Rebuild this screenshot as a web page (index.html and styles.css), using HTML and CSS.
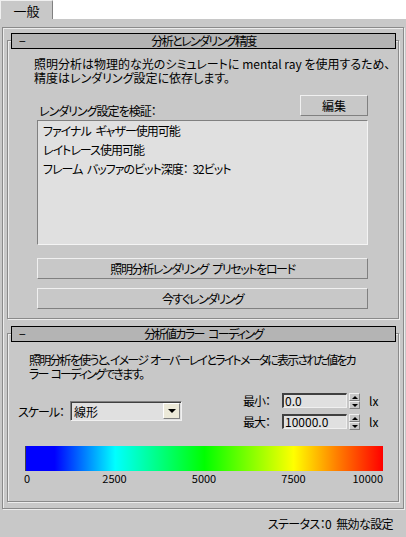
FILE: index.html
```html
<!DOCTYPE html>
<html lang="ja">
<head>
    <meta charset="UTF-8">
    <meta name="viewport" content="width=device-width, initial-scale=1.0">
    <title>照明分析</title>
    <link rel="stylesheet" href="styles.css">
</head>
<body>
    <div class="tabs">
        <div class="tab">一般</div>
        <div class="tab-fill"></div>
    </div>

    <div class="panel">
        <div class="rollout rollout-render">
            <div class="rollout-head">
                <span class="collapse">−</span>
                <span class="rollout-title">分析とレンダリング精度</span>
            </div>
            <p class="desc desc-render">照明分析は物理的な光のシミュレートに mental ray を使用するため、<br>精度はレンダリング設定に依存します。</p>
            <div class="verify">
                <span class="verify-label">レンダリング設定を検証：</span>
                <button class="btn btn-edit">編集</button>
            </div>
            <ul class="listbox">
                <li>ファイナル ギャザー使用可能</li>
                <li>レイトレース使用可能</li>
                <li>フレーム バッファのビット深度： 32ビット</li>
            </ul>
            <button class="btn btn-wide btn-preset">照明分析レンダリング プリセットをロード</button>
            <button class="btn btn-wide btn-render">今すぐレンダリング</button>
        </div>

        <div class="rollout rollout-color">
            <div class="rollout-head">
                <span class="collapse">−</span>
                <span class="rollout-title">分析値カラー コーディング</span>
            </div>
            <p class="desc desc-color">照明分析を使うと、イメージ オーバーレイとライトメータに表示された値をカ<br>ラー コーディングできます。</p>
            <div class="scale-row">
                <span class="scale-label">スケール：</span>
                <div class="select">
                    <span class="select-value">線形</span>
                    <span class="select-arrow"></span>
                </div>
                <div class="range">
                    <span>最小：</span>
                    <span class="field">0.0</span>
                    <span class="spinner"><span class="spin-up"></span><span class="spin-down"></span></span>
                    <span class="unit">lx</span>
                    <span>最大：</span>
                    <span class="field">10000.0</span>
                    <span class="spinner"><span class="spin-up"></span><span class="spin-down"></span></span>
                    <span class="unit">lx</span>
                </div>
            </div>
            <div class="colorbar"></div>
            <div class="scale-labels">
                <span class="first">0</span>
                <span>2500</span>
                <span>5000</span>
                <span>7500</span>
                <span class="last">10000</span>
            </div>
        </div>
    </div>

    <div class="status">ステータス：0 無効な設定</div>
</body>
</html>
```

FILE: styles.css
```css
body{
    margin: 0;
    background: #c8c8c8;
    color: #000;
    font-family: "Noto Sans CJK JP", sans-serif;
    font-size: 12px;
    line-height: 13px;
    letter-spacing: -1px;
    word-spacing: 3px;
    font-feature-settings: "palt";
}

/* tab strip */
.tabs{
    display: flex;
    height: 19px;
}
.tab{
    width: 53px;
    box-sizing: border-box;
    border-top: 1px solid #f0f0f0;
    border-left: 1px solid #f0f0f0;
    border-right: 1px solid #808080;
    border-top-right-radius: 2px;
    padding-top: 3px;
    text-align: center;
    font-size: 13px;
    letter-spacing: 0;
}
.tab-fill{
    flex: 1;
    background: #fff;
}

.panel{
    box-sizing: border-box;
    width: 402px;
    margin: 8px 0 0 2px;
    padding: 12px 4px 6px;
    border: 1px solid #8a8a8a;
    box-shadow: inset 1px 1px #ececec, 1px 1px #ececec;
}

/* rollouts */
.rollout{
    border: 1px solid #8a8a8a;
    box-shadow: inset 1px 1px #ececec, 1px 1px #ececec;
    padding-bottom: 9px;
}
.rollout-color{
    margin-top: 14px;
    padding-bottom: 16px;
}
.rollout-head{
    display: grid;
    grid-template-columns: 1fr auto 1fr;
    box-sizing: border-box;
    height: 16px;
    margin: -8px 2px 0 3px;
    background: #b4b4b4;
    border: 1px solid #000;
    line-height: 14px;
}
.rollout-title{
    letter-spacing: -1.6px;
}
.collapse{
    padding-left: 7px;
}
.desc{
    margin: 8px 0 0 26px;
    line-height: 14px;
    white-space: nowrap;
}
.desc-render{
    letter-spacing: 0;
    word-spacing: 0;
}
.desc-color{
    margin: 11px 0 0 21px;
    letter-spacing: -1.8px;
    word-spacing: 2px;
}

.verify{
    display: flex;
    height: 22px;
    margin: 10px 30px 0 31px;
}
.verify-label{
    align-self: flex-end;
}

.btn{
    font: inherit;
    letter-spacing: inherit;
    word-spacing: inherit;
    color: #000;
    background: #c8c8c8;
    padding: 0;
    border: 1px solid;
    border-color: #f0f0f0 #808080 #808080 #f0f0f0;
}
.btn-edit{
    width: 68px;
    height: 21px;
    margin-left: auto;
    letter-spacing: 0;
}
.btn-wide{
    display: block;
    width: 331px;
    height: 21px;
    margin: 13px 0 0 29px;
    letter-spacing: -1.4px;
}
.btn-render{
    margin-top: 9px;
    letter-spacing: -1.6px;
}

.listbox{
    box-sizing: border-box;
    height: 125px;
    margin: 3px 30px 0 29px;
    padding: 0 0 0 5px;
    list-style: none;
    background: #e0e0e0;
    border: 1px solid;
    border-color: #808080 #f4f4f4 #f4f4f4 #808080;
}
.listbox li{
    line-height: 19px;
}

/* colour coding */
.scale-row{
    display: flex;
    align-items: center;
    margin-top: 12px;
    padding-left: 10px;
}
.scale-label{
    width: 52px;
}
.select{
    display: flex;
    align-items: center;
    box-sizing: border-box;
    width: 112px;
    height: 20px;
    padding: 0 1px 0 3px;
    background: #e0e0e0;
    border: 1px solid;
    border-color: #808080 #f0f0f0 #f0f0f0 #808080;
    box-shadow: inset 1px 1px #404040;
}
.select-value{
    flex: 1;
    letter-spacing: 0;
}
.select-arrow{
    display: flex;
    align-items: center;
    justify-content: center;
    box-sizing: border-box;
    width: 17px;
    height: 16px;
    background: #ece9d8;
    border: 1px solid;
    border-color: #fff #808080 #808080 #fff;
}
.select-arrow::before{
    content: "";
    border-left: 4px solid transparent;
    border-right: 4px solid transparent;
    border-top: 4px solid #000;
}

.range{
    display: grid;
    grid-template-columns: 37px 65px 11px auto;
    grid-auto-rows: 15px;
    column-gap: 2px;
    row-gap: 6px;
    align-items: center;
    margin-left: 61px;
}
.field{
    box-sizing: border-box;
    height: 15px;
    padding-left: 1px;
    line-height: 12px;
    letter-spacing: 0;
    background: #e0e0e0;
    border-top: 2px solid #404040;
    border-left: 2px solid #404040;
    border-right: 1px solid #f0f0f0;
    border-bottom: 1px solid #f0f0f0;
}
.spinner{
    display: flex;
    flex-direction: column;
    align-self: start;
    height: 16px;
}
.spin-up,
.spin-down{
    flex: 1;
    display: flex;
    align-items: center;
    justify-content: center;
    background: #c8c8c8;
    border: 1px solid;
    border-color: #f0f0f0 #808080 #808080 #f0f0f0;
}
.spin-up::before{
    content: "";
    border-left: 3px solid transparent;
    border-right: 3px solid transparent;
    border-bottom: 3px solid #000;
}
.spin-down::before{
    content: "";
    border-left: 3px solid transparent;
    border-right: 3px solid transparent;
    border-top: 3px solid #000;
}
.unit{
    padding-left: 7px;
    letter-spacing: 0;
}

.colorbar{
    height: 25px;
    margin: 17px 15px 0 17px;
    border-left: 1px solid #444;
    background: linear-gradient(to right, #0000ff 0%, #0000ff 8%, #00ffff 25%, #00ff00 50%, #ffff00 75%, #ff8000 87%, #ff0000 100%);
}
.scale-labels{
    display: grid;
    grid-template-columns: 1fr 2fr 2fr 2fr 1fr;
    margin: 1px 15px 0 17px;
    font-size: 11px;
    letter-spacing: 0;
    text-align: center;
}
.scale-labels .first{
    text-align: left;
    margin-left: -1px;
}
.scale-labels .last{
    text-align: right;
}

.status{
    margin-top: 8px;
    padding-right: 13px;
    text-align: right;
    letter-spacing: -0.6px;
}
```
